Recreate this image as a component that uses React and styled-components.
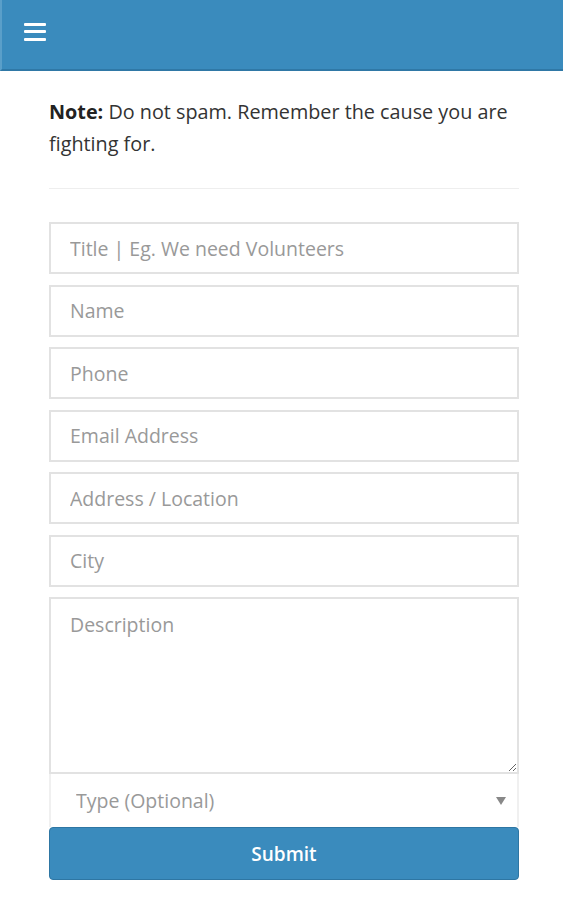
import styled, { createGlobalStyle } from "styled-components";

const GlobalStyle = createGlobalStyle`
  body {
    margin: 0;
    background: #fff;
    font-family: "Open Sans", "Liberation Sans", sans-serif;
    color: #333;
  }
  * { box-sizing: border-box; }
`;

const StyledHeader = styled.header`
  height: 71px;
  background-color: #3a8bbd;
  border-bottom: 2px solid #2f78a6;
  border-left: 2px solid #5a9fc9;
  display: flex;
  align-items: center;
  padding-left: 22px;
`;

const StyledMenuButton = styled.button`
  background: none;
  border: none;
  padding: 0;
  width: 22px;
  height: 18px;
  display: flex;
  flex-direction: column;
  justify-content: space-between;
  margin-top: -6px;
  span {
    display: block;
    height: 3px;
    background: #fff;
    border-radius: 1px;
  }
`;

const StyledMain = styled.main`
  padding: 0 44px 0 49px;
`;

const StyledNote = styled.p`
  margin: 25px 0 0;
  font-size: 19.8px;
  line-height: 32px;
  color: #333;
  b {
    color: #222;
  }
`;

const StyledDivider = styled.hr`
  margin: 28px 0 33px;
  border: 0;
  border-top: 1px solid #eee;
`;

const StyledForm = styled.form`
  display: flex;
  flex-direction: column;
`;

const StyledInput = styled.input`
  height: 52px;
  width: 100%;
  margin-bottom: 10.5px;
  border: 2px solid #e2e2e2;
  padding: 0 19px;
  font-family: "Open Sans", "Liberation Sans", sans-serif;
  font-size: 19.5px;
  color: #555;
  outline: none;
  &::placeholder {
    color: #999;
  }
`;

const StyledTextarea = styled.textarea`
  height: 177px;
  width: 100%;
  border: 2px solid #e2e2e2;
  padding: 12px 19px;
  font-family: "Open Sans", "Liberation Sans", sans-serif;
  font-size: 19.5px;
  color: #555;
  outline: none;
  resize: vertical;
  display: block;
  &::placeholder {
    color: #999;
  }
`;

const StyledSelectWrap = styled.div`
  position: relative;
  height: 53px;
  border-left: 2px solid #f0f0f0;
  border-right: 2px solid #f0f0f0;
  &::after {
    content: "";
    position: absolute;
    right: 11px;
    top: 23px;
    border-left: 5px solid transparent;
    border-right: 5px solid transparent;
    border-top: 8px solid #888;
    pointer-events: none;
  }
`;

const StyledSelect = styled.select`
  appearance: none;
  width: 100%;
  height: 100%;
  border: none;
  background: transparent;
  padding: 0 25px;
  font-family: "Open Sans", "Liberation Sans", sans-serif;
  font-size: 19.5px;
  color: #999;
  outline: none;
`;

const StyledSubmit = styled.button`
  height: 53px;
  width: 100%;
  background-color: #3a8bbd;
  border: 1px solid #2e76a3;
  border-radius: 4px;
  color: #fff;
  font-family: "Open Sans", "Liberation Sans", sans-serif;
  font-size: 19px;
  font-weight: 600;
`;

const fields = [
  "Title | Eg. We need Volunteers",
  "Name",
  "Phone",
  "Email Address",
  "Address / Location",
  "City",
];

function App() {
  return (
    <>
      <GlobalStyle />
      <StyledHeader>
        <StyledMenuButton type="button" aria-label="menu">
          <span />
          <span />
          <span />
        </StyledMenuButton>
      </StyledHeader>
      <StyledMain>
        <StyledNote>
          <b>Note:</b> Do not spam. Remember the cause you are fighting for.
        </StyledNote>
        <StyledDivider />
        <StyledForm onSubmit={(e) => e.preventDefault()}>
          {fields.map((f) => (
            <StyledInput key={f} placeholder={f} />
          ))}
          <StyledTextarea placeholder="Description" />
          <StyledSelectWrap>
            <StyledSelect defaultValue="">
              <option value="" disabled>
                Type (Optional)
              </option>
            </StyledSelect>
          </StyledSelectWrap>
          <StyledSubmit type="submit">Submit</StyledSubmit>
        </StyledForm>
      </StyledMain>
    </>
  );
}

export default App;
